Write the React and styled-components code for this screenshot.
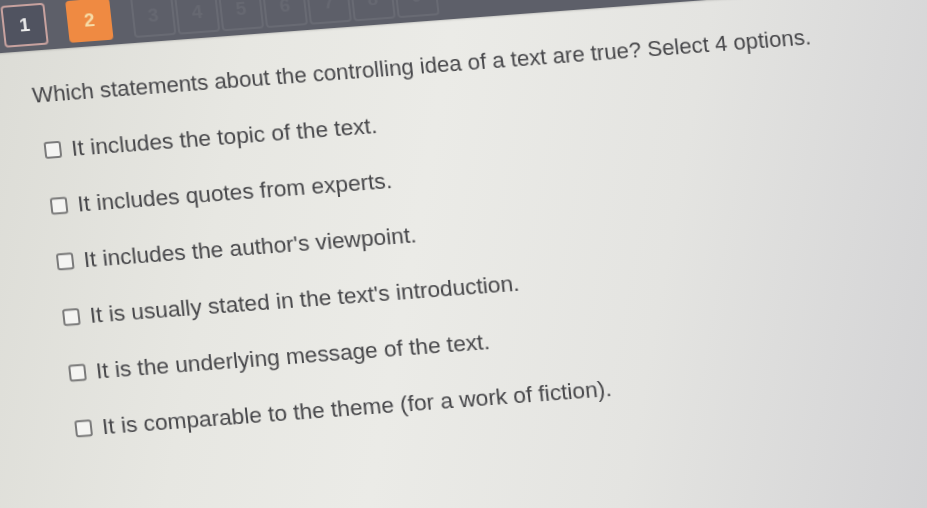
import React from 'react';
import styled, { createGlobalStyle } from 'styled-components';

const GlobalStyle = createGlobalStyle`
  html, body {
    margin: 0;
    padding: 0;
    width: 927px;
    height: 508px;
    overflow: hidden;
    background: #e2e2de;
  }
`;

const Viewport = styled.div`
  width: 927px;
  height: 508px;
  overflow: hidden;
  background: linear-gradient(
    100deg,
    #dcdcd6 0%,
    #e7e7e2 25%,
    #ebebe7 45%,
    #e4e4e1 70%,
    #d3d3d5 100%
  );
`;

/* the photographed screen is slightly tilted */
const Screen = styled.div`
  width: 1100px;
  margin-left: -40px;
  margin-top: -4px;
  transform-origin: 0 0;
  transform: rotate(-4.3deg) skewX(2deg);
  filter: blur(0.45px);
  font-family: 'Liberation Sans', Arial, sans-serif;
`;

const TabBar = styled.div`
  height: 60px;
  box-sizing: border-box;
  background: #5d5f69;
  display: flex;
  align-items: flex-end;
  padding: 0 0 5px 39px;
  box-shadow: 0 1px 2px rgba(0, 0, 0, 0.15);
`;

const Tab = styled.div`
  width: ${(p) => (p.$faint ? 42 : 44)}px;
  height: 42px;
  box-sizing: border-box;
  border-radius: 4px;
  display: flex;
  align-items: center;
  justify-content: center;
  font-size: 19px;
  font-weight: bold;
  margin-right: ${(p) => (p.$faint ? 2 : 21)}px;
  color: ${(p) => (p.$active ? '#f6dca8' : p.$faint ? 'rgba(255,255,255,0.06)' : '#eeeeee')};
  background: ${(p) => (p.$active ? '#ef8a42' : p.$faint ? 'transparent' : '#505360')};
  border: 2px solid
    ${(p) => (p.$active ? '#ef8a42' : p.$faint ? 'rgba(255,255,255,0.07)' : '#c8a29f')};
`;

const Body = styled.div`
  padding: 32px 0 0 61px;
  display: flex;
  flex-direction: column;
`;

const Question = styled.p`
  margin: 0;
  font-size: 22.2px;
  line-height: 26px;
  color: #47474a;
`;

const Options = styled.ul`
  list-style: none;
  margin: 29px 0 0 6px;
  padding: 0;
  display: flex;
  flex-direction: column;
  gap: 30px;
`;

const Option = styled.li`
  display: flex;
  align-items: center;
  gap: 10px;
  height: 26px;
  font-size: 22.7px;
  color: #47474a;
`;

const Box = styled.span`
  width: 17px;
  height: 17px;
  box-sizing: border-box;
  border: 2px solid #7a7a7a;
  border-radius: 3px;
  background: #f4f4f2;
  flex-shrink: 0;
`;

const options = [
  'It includes the topic of the text.',
  'It includes quotes from experts.',
  "It includes the author's viewpoint.",
  "It is usually stated in the text's introduction.",
  'It is the underlying message of the text.',
  'It is comparable to the theme (for a work of fiction).',
];

export default function App() {
  return (
    <Viewport>
      <GlobalStyle />
      <Screen>
        <TabBar>
          <Tab>1</Tab>
          <Tab $active>2</Tab>
          {[3, 4, 5, 6, 7, 8, 9].map((n) => (
            <Tab key={n} $faint>
              {n}
            </Tab>
          ))}
        </TabBar>
        <Body>
          <Question>
            Which statements about the controlling idea of a text are true? Select 4 options.
          </Question>
          <Options>
            {options.map((o) => (
              <Option key={o}>
                <Box />
                {o}
              </Option>
            ))}
          </Options>
        </Body>
      </Screen>
    </Viewport>
  );
}
